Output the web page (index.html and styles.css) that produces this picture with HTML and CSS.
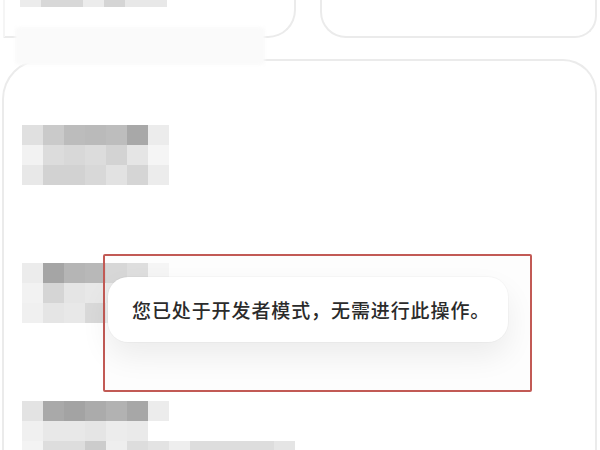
FILE: index.html
```html
<!DOCTYPE html>
<html lang="zh-CN">
<head>
<meta charset="utf-8">
<title>开发者模式</title>
<link rel="stylesheet" href="styles.css">
</head>
<body>
<div class="screen">
  <div class="top-row">
    <div class="top-card top-card-left">
      <div class="strip">
        <span class="cell k-ec"></span><span class="cell k-d8"></span><span class="cell k-d8"></span><span class="cell k-ec"></span><span class="cell k-d5"></span><span class="cell k-e8"></span><span class="cell k-e8"></span>
      </div>
    </div>
    <div class="top-card top-card-right"></div>
  </div>

  <div class="main-card">
    <div class="mosaic">
      <div class="mrow">
        <span class="cell k-e0"></span><span class="cell k-ca"></span><span class="cell k-bc"></span><span class="cell k-ba"></span><span class="cell k-bd"></span><span class="cell k-a8"></span><span class="cell k-ec"></span>
      </div>
      <div class="mrow">
        <span class="cell k-f2"></span><span class="cell k-dc"></span><span class="cell k-d8"></span><span class="cell k-dc"></span><span class="cell k-d3"></span><span class="cell k-e5"></span><span class="cell k-f5"></span>
      </div>
      <div class="mrow">
        <span class="cell k-e8"></span><span class="cell k-d2"></span><span class="cell k-d2"></span><span class="cell k-d8"></span><span class="cell k-e2"></span><span class="cell k-d5"></span><span class="cell k-ec"></span>
      </div>
    </div>

    <div class="mosaic">
      <div class="mrow">
        <span class="cell k-ec"></span><span class="cell k-a5"></span><span class="cell k-b5"></span><span class="cell k-b8"></span><span class="cell k-c5"></span><span class="cell k-d0"></span><span class="cell k-f3"></span>
      </div>
      <div class="mrow">
        <span class="cell k-f2"></span><span class="cell k-d5"></span><span class="cell k-e5"></span><span class="cell k-e8"></span><span class="cell k-e2"></span><span class="cell k-ec"></span><span class="cell k-f5"></span>
      </div>
      <div class="mrow">
        <span class="cell k-f0"></span><span class="cell k-e5"></span><span class="cell k-e8"></span><span class="cell k-d9"></span><span class="cell k-e8"></span><span class="cell k-f0"></span><span class="cell k-f5"></span>
      </div>
    </div>

    <div class="mosaic">
      <div class="mrow">
        <span class="cell k-e3"></span><span class="cell k-a9"></span><span class="cell k-a3"></span><span class="cell k-ab"></span><span class="cell k-b2"></span><span class="cell k-a7"></span><span class="cell k-ec"></span>
      </div>
      <div class="mrow">
        <span class="cell k-f0"></span><span class="cell k-e8"></span><span class="cell k-e8"></span><span class="cell k-e5"></span><span class="cell k-ec"></span><span class="cell k-ea"></span>
      </div>
      <div class="mrow">
        <span class="cell k-f3"></span><span class="cell k-dd"></span><span class="cell k-dd"></span><span class="cell k-cc"></span><span class="cell k-ee"></span><span class="cell k-dd"></span><span class="cell k-e3"></span><span class="cell k-ee"></span><span class="cell k-dd"></span><span class="cell k-dd"></span><span class="cell k-dd"></span><span class="cell k-dd"></span><span class="cell k-e5"></span>
      </div>
    </div>
  </div>

  <div class="patch"></div>

  <div class="highlight"></div>
  <div class="toast">您已处于开发者模式，无需进行此操作。</div>
</div>
</body>
</html>
```

FILE: styles.css
```css
html, body {
  margin: 0;
  padding: 0;
  background: #ffffff;
}

.screen {
  position: relative;
  width: 600px;
  height: 450px;
  overflow: hidden;
  background: #ffffff;
  font-family: "Noto Sans CJK SC", "Noto Sans", sans-serif;
}

.top-row {
  display: flex;
  height: 38px;
  padding-left: 3px;
  gap: 24px;
}

.top-card {
  box-sizing: border-box;
  height: 38px;
  border: 2px solid #ebebeb;
  border-top: none;
  border-radius: 0 0 28px 28px;
}

.top-card-left {
  width: 293px;
  border-left-color: #f5f5f5;
  border-radius: 0 0 28px 0;
  padding-left: 15px;
}

.top-card-right {
  width: 277px;
  border-radius: 0 0 22px 26px;
}

.strip {
  display: flex;
  height: 7px;
  filter: blur(0.6px);
}

.strip .cell {
  height: 7px;
}

.main-card {
  box-sizing: border-box;
  margin-top: 21px;
  margin-left: 2px;
  width: 595px;
  height: 420px;
  border: 2px solid #ebebeb;
  border-bottom: none;
  border-radius: 40px 34px 0 0;
  padding: 64px 0 0 18px;
  display: flex;
  flex-direction: column;
  gap: 78px;
}

.mosaic {
  display: flex;
  flex-direction: column;
  filter: blur(0.7px);
}

.mrow {
  display: flex;
}

.cell {
  display: block;
  width: 21px;
  height: 20px;
  flex: none;
}

.k-a3 { background: #a3a3a3; }
.k-a5 { background: #a5a5a5; }
.k-a7 { background: #a7a7a7; }
.k-a8 { background: #a8a8a8; }
.k-a9 { background: #a9a9a9; }
.k-ab { background: #ababab; }
.k-b2 { background: #b2b2b2; }
.k-b5 { background: #b5b5b5; }
.k-b8 { background: #b8b8b8; }
.k-ba { background: #bababa; }
.k-bc { background: #bcbcbc; }
.k-bd { background: #bdbdbd; }
.k-c5 { background: #c5c5c5; }
.k-ca { background: #cacaca; }
.k-cc { background: #cccccc; }
.k-d0 { background: #d0d0d0; }
.k-d2 { background: #d2d2d2; }
.k-d3 { background: #d3d3d3; }
.k-d5 { background: #d5d5d5; }
.k-d8 { background: #d8d8d8; }
.k-d9 { background: #d9d9d9; }
.k-dc { background: #dcdcdc; }
.k-dd { background: #dddddd; }
.k-e0 { background: #e0e0e0; }
.k-e2 { background: #e2e2e2; }
.k-e3 { background: #e3e3e3; }
.k-e5 { background: #e5e5e5; }
.k-e8 { background: #e8e8e8; }
.k-ea { background: #eaeaea; }
.k-ec { background: #ececec; }
.k-ee { background: #eeeeee; }
.k-f0 { background: #f0f0f0; }
.k-f2 { background: #f2f2f2; }
.k-f3 { background: #f3f3f3; }
.k-f5 { background: #f5f5f5; }

/* faint blurred patch overlapping the card edges */
.patch {
  position: absolute;
  left: 15px;
  top: 27px;
  width: 250px;
  height: 38px;
  background: #fafafa;
  border-radius: 4px;
  filter: blur(1.5px);
}

/* red annotation rectangle */
.highlight {
  position: absolute;
  left: 103px;
  top: 254px;
  width: 425px;
  height: 134px;
  border: 2px solid #c25a55;
  border-radius: 2px;
  background: rgba(250, 250, 250, 0.35);
}

.toast {
  position: absolute;
  left: 108px;
  top: 277px;
  box-sizing: border-box;
  width: 400px;
  height: 65px;
  padding-left: 24px;
  display: flex;
  align-items: center;
  background: #ffffff;
  border-radius: 20px;
  box-shadow: 0 0 0 1px rgba(0, 0, 0, 0.025), 0 14px 30px rgba(0, 0, 0, 0.07);
  color: #2b2b2b;
  font-size: 19px;
  font-weight: 500;
  letter-spacing: 0.9px;
  white-space: nowrap;
}
```
